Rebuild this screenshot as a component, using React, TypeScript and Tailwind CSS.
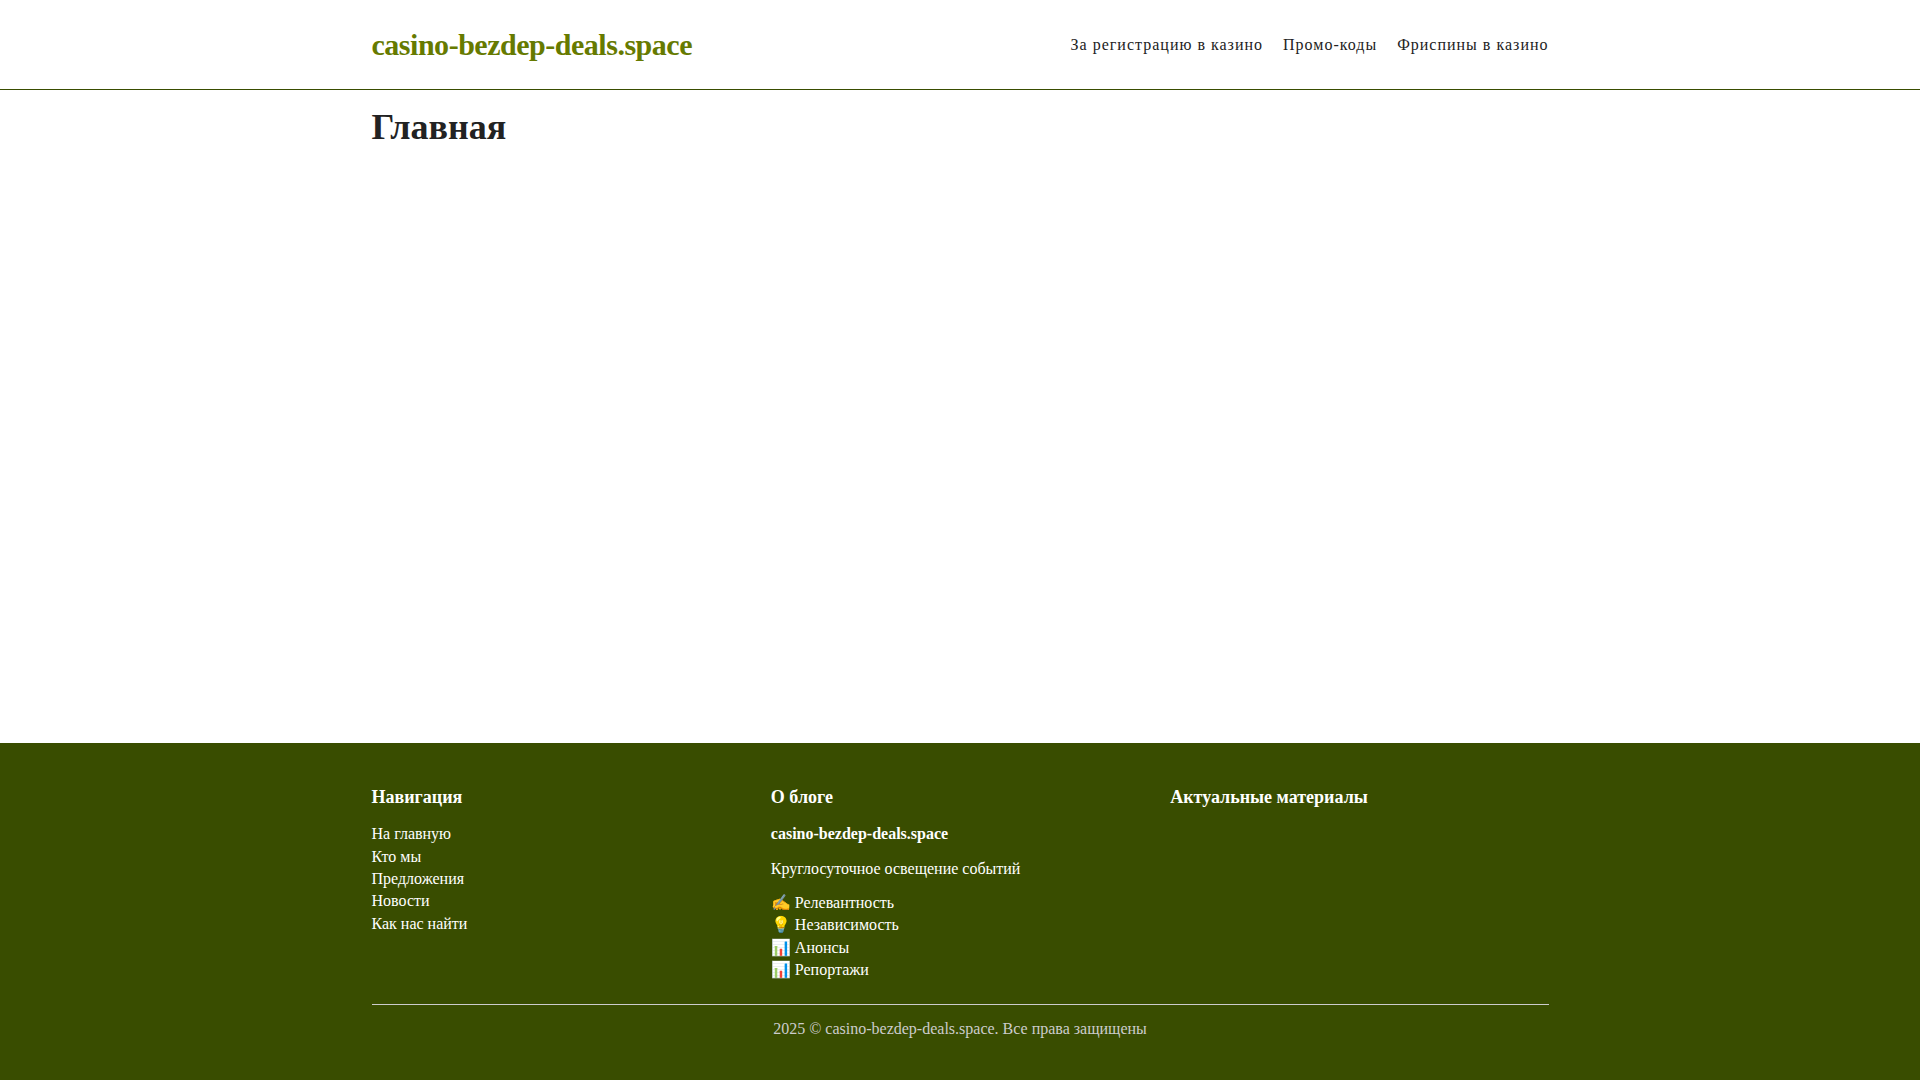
const menu = ["За регистрацию в казино", "Промо-коды", "Фриспины в казино"];

const footerLinks = ["На главную", "Кто мы", "Предложения", "Новости", "Как нас найти"];

const features = [
  { icon: "✍️", title: "Релевантность" },
  { icon: "💡", title: "Независимость" },
  { icon: "📊", title: "Анонсы" },
  { icon: "📊", title: "Репортажи" },
];

function Header() {
  return (
    <header className="border-b border-[#394d00] bg-white">
      <div className="mx-auto flex w-full max-w-[1177px] items-center justify-between py-6">
        <a href="#" className="text-3xl leading-[41px] font-bold tracking-[-0.016em] text-[#667a00]">
          casino-bezdep-deals.space
        </a>
        <nav className="flex gap-5 leading-[23px] tracking-[1px]">
          {menu.map((item) => (
            <a key={item} href="#">
              {item}
            </a>
          ))}
        </nav>
      </div>
    </header>
  );
}

function Footer() {
  return (
    <footer className="bg-[#394d00] py-10 text-white">
      <div className="mx-auto w-full max-w-[1177px]">
        <div className="grid grid-cols-3 gap-[21px]">
          <section>
            <h2 className="mb-3 text-lg font-bold">Навигация</h2>
            <ul>
              {footerLinks.map((item) => (
                <li key={item}>
                  <a href="#">{item}</a>
                </li>
              ))}
            </ul>
          </section>
          <section>
            <h2 className="mb-3 text-lg font-bold">О блоге</h2>
            <p className="mb-3 font-bold">casino-bezdep-deals.space</p>
            <p className="mb-3">Круглосуточное освещение событий</p>
            <ul>
              {features.map((item) => (
                <li key={item.title}>
                  {item.icon} {item.title}
                </li>
              ))}
            </ul>
          </section>
          <section>
            <h2 className="text-lg font-bold">Актуальные материалы</h2>
          </section>
        </div>
        <p className="mt-[22px] border-t border-[#ccc] pt-[13px] text-center text-[#ccc]">
          2025 © casino-bezdep-deals.space. Все права защищены
        </p>
      </div>
    </footer>
  );
}

export default function App() {
  return (
    <div className="flex min-h-screen flex-col bg-white font-['Liberation_Serif',serif] text-base leading-[1.4] text-[#222]">
      <Header />
      <main className="mx-auto w-full max-w-[1177px] grow pt-3">
        <h1 className="text-4xl leading-[50px] font-bold">Главная</h1>
      </main>
      <Footer />
    </div>
  );
}
